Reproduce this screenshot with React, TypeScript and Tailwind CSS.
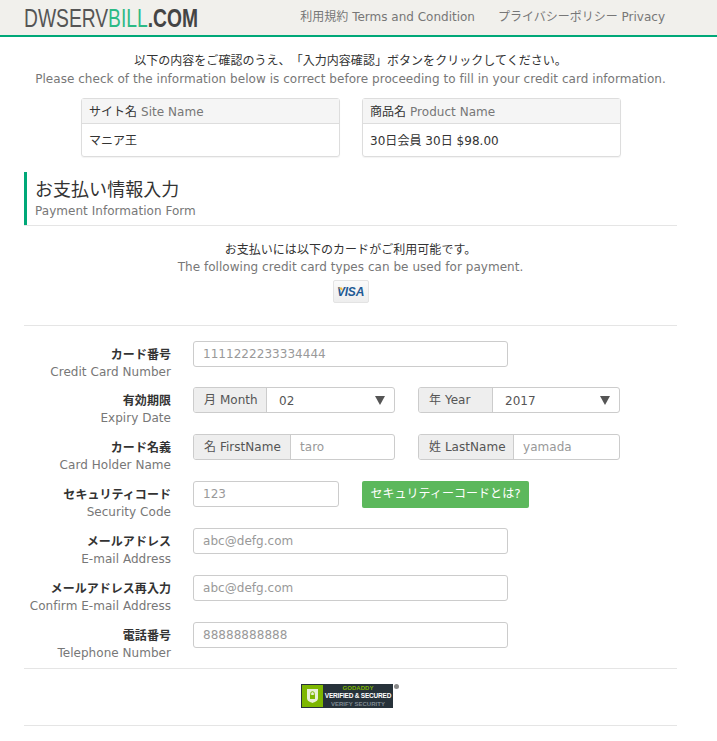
const font = "[font-family:'DejaVu_Sans','Noto_Sans_CJK_JP',sans-serif]";

function Hr() {
  return <div className="h-px bg-[#e5e5e5]" />;
}

function InfoCard({ jp, en, value }: { jp: string; en: string; value: string }) {
  return (
    <div className="w-[259px] rounded-[3px] border border-[#ddd] shadow-[0_1px_1px_rgba(0,0,0,0.05)]">
      <div className="h-[25px] border-b border-[#ddd] bg-[#f5f5f5] px-[7px] text-[12px] leading-[26px] text-[#333]">
        {jp} <span className="text-[#777]">{en}</span>
      </div>
      <div className="h-[32px] px-[7px] text-[12px] leading-[34px] text-[#333]">{value}</div>
    </div>
  );
}

function Row({ jp, en, children }: { jp: string; en: string; children: React.ReactNode }) {
  return (
    <div className="flex h-[47px] first:h-[46px] last:h-[46px]">
      <div className="w-[147px] pt-[5px] text-right">
        <div className="text-[12px] font-bold leading-[18px] text-[#333]">{jp}</div>
        <div className="text-[12px] leading-[16px] text-[#777]">{en}</div>
      </div>
      <div className="ml-[22px] flex-1">{children}</div>
    </div>
  );
}

function TextBox({ value, w }: { value: string; w: string }) {
  return (
    <div className={`${w} h-[26px] rounded-[3px] border border-[#ccc] px-[9px] text-[12px] leading-[24px] text-[#999]`}>
      {value}
    </div>
  );
}

function Group({ label, labelW, value, select }: { label: string; labelW: string; value: string; select?: boolean }) {
  return (
    <div className="flex h-[26px] w-[202px] rounded-[3px] border border-[#ccc] text-[12px] leading-[25px]">
      <div className={`${labelW} shrink-0 rounded-l-[2px] border-r border-[#ccc] bg-[#eee] pl-[10px] text-[#555]`}>{label}</div>
      {select ? (
        <div className="flex flex-1 items-center justify-between pl-[12px] pr-[9px] text-[#555]">
          <span className="pt-[2px]">{value}</span>
          <svg width="10" height="9" viewBox="0 0 10 9" className="fill-[#555]">
            <path d="M0 0h10L5 9z" />
          </svg>
        </div>
      ) : (
        <div className="flex-1 pl-[9px] text-[#999]">{value}</div>
      )}
    </div>
  );
}

export default function App() {
  return (
    <div className={`${font} h-[741px] w-[717px] overflow-hidden bg-white tracking-[0.04px] [text-spacing-trim:space-all]`}>
      <div className="flex h-[37px] items-center justify-between border-b-2 border-[#00a878] bg-[#f1f0ec] pl-[24px] pr-[52px]">
        <div className="w-[174px]">
          <div className="flex origin-left scale-x-[0.74] items-baseline whitespace-nowrap font-['Liberation_Sans',sans-serif] text-[26px] leading-[38px] tracking-normal">
            <span className="text-[#555]">DWSERV</span>
            <span className="text-[#2cba85]">BILL</span>
            <span className="font-bold text-[#444]">.COM</span>
          </div>
        </div>
        <div className="flex gap-[23px] pb-[2px] text-[12px] tracking-normal text-[#777]">
          <span>利用規約 Terms and Condition</span>
          <span>プライバシーポリシー Privacy</span>
        </div>
      </div>

      <div className="ml-[24px] w-[653px]">
        <div className="pt-[15px] text-center text-[12px] leading-[18px]">
          <p className="text-[#333]">以下の内容をご確認のうえ、「入力内容確認」ボタンをクリックしてください。</p>
          <p className="text-[#777]">Please check of the information below is correct before proceeding to fill in your credit card information.</p>
        </div>

        <div className="mt-[10px] ml-[57px] flex gap-[22px]">
          <InfoCard jp="サイト名" en="Site Name" value="マニア王" />
          <InfoCard jp="商品名" en="Product Name" value="30日会員 30日 $98.00" />
        </div>

        <div className="mt-[15px] h-[53px] border-l-[3px] border-[#00a878] pl-[8px] pt-[6px]">
          <div className="text-[18px] leading-[24px] text-[#333]">お支払い情報入力</div>
          <div className="text-[12px] leading-[18px] text-[#777]">Payment Information Form</div>
        </div>
        <Hr />

        <div className="pt-[15px] text-center text-[12px]">
          <p className="leading-[18px] text-[#333]">お支払いには以下のカードがご利用可能です。</p>
          <p className="leading-[16px] text-[#777]">The following credit card types can be used for payment.</p>
        </div>
        <div className="mt-[5px] flex justify-center">
          <div className="flex h-[23px] w-[36px] items-center justify-center rounded-[2px] border border-[#e3e3e3] bg-gradient-to-b from-[#fafafa] to-[#eee]">
            <svg width="28" height="11" viewBox="0 0 28 11" className="absolute">
              <path d="M1 1.500h4l1 3.500z" fill="#f0b83c" />
            </svg>
            <span className="font-['Liberation_Sans',sans-serif] text-[12px] font-bold italic tracking-[-0.2px] text-[#1f5a94]">VISA</span>
          </div>
        </div>
        <div className="mt-[22px]">
          <Hr />
        </div>

        <div className="pt-[15px]">
          <Row jp="カード番号" en="Credit Card Number">
            <TextBox value="1111222233334444" w="w-[315px]" />
          </Row>
          <Row jp="有効期限" en="Expiry Date">
            <div className="flex gap-[23px]">
              <Group label="月 Month" labelW="w-[73px]" value="02" select />
              <Group label="年 Year" labelW="w-[74px]" value="2017" select />
            </div>
          </Row>
          <Row jp="カード名義" en="Card Holder Name">
            <div className="flex gap-[23px]">
              <Group label="名 FirstName" labelW="w-[97px]" value="taro" />
              <Group label="姓 LastName" labelW="w-[95px]" value="yamada" />
            </div>
          </Row>
          <Row jp="セキュリティコード" en="Security Code">
            <div className="flex gap-[23px]">
              <TextBox value="123" w="w-[146px]" />
              <div className="h-[27px] w-[167px] rounded-[2px] bg-[#5cb85c] text-center text-[12px] leading-[27px] text-white">セキュリティーコードとは?</div>
            </div>
          </Row>
          <Row jp="メールアドレス" en="E-mail Address">
            <TextBox value="abc@defg.com" w="w-[315px]" />
          </Row>
          <Row jp="メールアドレス再入力" en="Confirm E-mail Address">
            <TextBox value="abc@defg.com" w="w-[315px]" />
          </Row>
          <Row jp="電話番号" en="Telephone Number">
            <TextBox value="88888888888" w="w-[315px]" />
          </Row>
        </div>
        <Hr />

        <div className="flex justify-center pr-[8px] pt-[15px]">
          <div className="relative flex h-[24px] w-[92px] bg-[#27323a]">
            <div className="m-[1px] flex w-[21px] items-center justify-center bg-[#7db701]">
              <svg width="13" height="16" viewBox="0 0 13 16">
                <path d="M1 1h11v9c0 3-3 4-5.500 5C4 14 1 13 1 10z" fill="#e8f0d8" />
                <rect x="4" y="7" width="5" height="4" fill="#7db701" />
                <path d="M4.700 7V5.500a1.800 1.800 0 0 1 3.600 0V7" fill="none" stroke="#7db701" />
              </svg>
            </div>
            <div className="flex flex-1 flex-col items-center justify-center font-['Liberation_Sans',sans-serif] font-bold leading-[8px]">
              <span className="text-[6px] text-[#7db701]">GODADDY</span>
              <span className="text-[6.500px] tracking-[-0.2px] text-white">VERIFIED &amp; SECURED</span>
              <span className="text-[6px] text-[#7f8a92]">VERIFY SECURITY</span>
            </div>
            <span className="absolute right-[-6px] top-0 h-[5px] w-[5px] rounded-full bg-[#888]" />
          </div>
        </div>
        <div className="mt-[17px]">
          <Hr />
        </div>
      </div>
    </div>
  );
}
